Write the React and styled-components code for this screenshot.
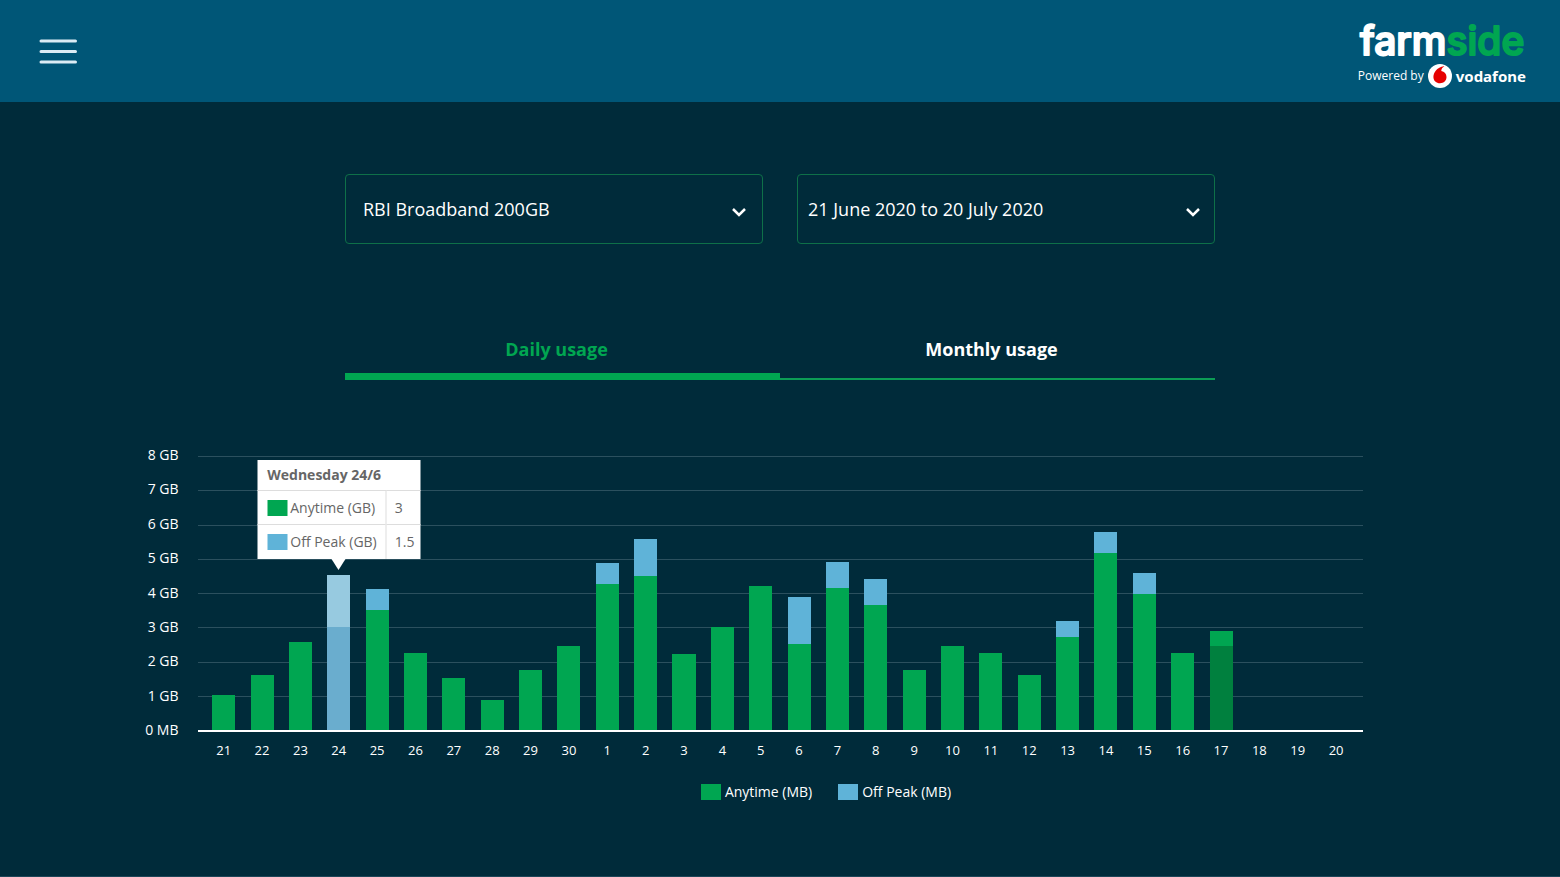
import React, { useState } from "react";
import styled, { createGlobalStyle } from "styled-components";

const MAX_GB = 8;

const TICKS = ["8 GB", "7 GB", "6 GB", "5 GB", "4 GB", "3 GB", "2 GB", "1 GB", "0 MB"];

const DAYS = [
  { day: 21, anytime: 1.02 },
  { day: 22, anytime: 1.62 },
  { day: 23, anytime: 2.58 },
  { day: 24, anytime: 3, offPeak: 1.54, state: "active" },
  { day: 25, anytime: 3.5, offPeak: 0.63 },
  { day: 26, anytime: 2.26 },
  { day: 27, anytime: 1.53 },
  { day: 28, anytime: 0.89 },
  { day: 29, anytime: 1.76 },
  { day: 30, anytime: 2.46 },
  { day: 1, anytime: 4.26, offPeak: 0.63 },
  { day: 2, anytime: 4.5, offPeak: 1.09 },
  { day: 3, anytime: 2.22 },
  { day: 4, anytime: 3.02 },
  { day: 5, anytime: 4.21 },
  { day: 6, anytime: 2.5, offPeak: 1.39 },
  { day: 7, anytime: 4.16, offPeak: 0.76 },
  { day: 8, anytime: 3.66, offPeak: 0.76 },
  { day: 9, anytime: 1.76 },
  { day: 10, anytime: 2.46 },
  { day: 11, anytime: 2.26 },
  { day: 12, anytime: 1.62 },
  { day: 13, anytime: 2.73, offPeak: 0.46 },
  { day: 14, anytime: 5.16, offPeak: 0.63 },
  { day: 15, anytime: 3.96, offPeak: 0.61 },
  { day: 16, anytime: 2.26 },
  { day: 17, anytime: 2.46, offPeak: 0.44, state: "today" },
  { day: 18 },
  { day: 19 },
  { day: 20 },
];

const COLORS = {
  default: { anytime: "#00a651", offPeak: "#5fb3d8" },
  active: { anytime: "#6aadce", offPeak: "#97cae0" },
  today: { anytime: "#00803e", offPeak: "#00a651" },
};

const percent = (gb) => `${(gb / MAX_GB) * 100}%`;

function Logo() {
  return (
    <S.Logo>
      <S.LogoName width="168" height="34" viewBox="0 0 168 34">
        <text x="2" y="31">
          farm<tspan className="green">side</tspan>
        </text>
      </S.LogoName>
      <S.Powered>
        Powered by
        <svg width="24" height="24" viewBox="0 0 24 24" aria-hidden="true">
          <circle cx="12" cy="12" r="12" fill="#fff" />
          <path
            d="M15.8 2.2C12.8 2.3 9.6 4.3 7.7 6.8C6.2 8.8 5.4 11 5.4 13C5.4 16.8 8.3 19.3 12 19.3C15.8 19.3 18.5 16.7 18.5 13.1C18.5 9.8 16.4 7.7 13.3 7C13.2 5 14.4 3.1 16.4 2.4Z"
            fill="#e60000"
          />
        </svg>
        <S.Vodafone>vodafone</S.Vodafone>
      </S.Powered>
    </S.Logo>
  );
}

function Dropdown({ label, options, start, end }) {
  return (
    <S.Field>
      <S.Select aria-label={label} $start={start}>
        {options.map((option) => (
          <option key={option}>{option}</option>
        ))}
      </S.Select>
      <S.Chevron width="16" height="10" viewBox="0 0 16 10" aria-hidden="true" $end={end}>
        <path d="M2 2L8 8L14 2" fill="none" stroke="#fff" strokeWidth="2.5" />
      </S.Chevron>
    </S.Field>
  );
}

function Tooltip() {
  return (
    <S.Tooltip>
      <S.TooltipTable>
        <thead>
          <tr>
            <S.TooltipTitle colSpan="2">Wednesday 24/6</S.TooltipTitle>
          </tr>
        </thead>
        <tbody>
          <tr>
            <S.TooltipLabel>
              <S.TooltipKey>
                <S.Swatch $color={COLORS.default.anytime} />
                Anytime (GB)
              </S.TooltipKey>
            </S.TooltipLabel>
            <S.TooltipValue>3</S.TooltipValue>
          </tr>
          <tr>
            <S.TooltipLabel>
              <S.TooltipKey>
                <S.Swatch $color={COLORS.default.offPeak} />
                Off Peak (GB)
              </S.TooltipKey>
            </S.TooltipLabel>
            <S.TooltipValue>1.5</S.TooltipValue>
          </tr>
        </tbody>
      </S.TooltipTable>
    </S.Tooltip>
  );
}

function Bar({ anytime = 0, offPeak = 0, state = "default" }) {
  const total = anytime + offPeak;

  return (
    <S.Bar $color={COLORS[state].anytime} style={{ height: percent(total) }}>
      {state === "active" && <Tooltip />}
      {offPeak > 0 && (
        <S.OffPeak
          $color={COLORS[state].offPeak}
          style={{ height: `${(offPeak / total) * 100}%` }}
        />
      )}
    </S.Bar>
  );
}

function Chart() {
  return (
    <S.Chart>
      <S.YAxis>
        {TICKS.map((tick) => (
          <span key={tick}>{tick}</span>
        ))}
      </S.YAxis>
      <S.Plot>
        <S.Grid>
          {TICKS.slice(1).map((tick) => (
            <S.GridLine key={tick} />
          ))}
        </S.Grid>
        <S.Bars>
          {DAYS.map(({ day, ...usage }) => (
            <S.Slot key={day}>
              <Bar {...usage} />
            </S.Slot>
          ))}
        </S.Bars>
      </S.Plot>
      <S.XAxis>
        {DAYS.map(({ day }) => (
          <span key={day}>{day}</span>
        ))}
      </S.XAxis>
      <S.Legend>
        <S.LegendItem>
          <S.Swatch $color={COLORS.default.anytime} />
          Anytime (MB)
        </S.LegendItem>
        <S.LegendItem>
          <S.Swatch $color={COLORS.default.offPeak} />
          Off Peak (MB)
        </S.LegendItem>
      </S.Legend>
    </S.Chart>
  );
}

export default function App() {
  const [tab, setTab] = useState("daily");

  return (
    <S.Page>
      <GlobalStyle />
      <S.Header>
        <S.MenuButton aria-label="Menu">
          <svg width="38" height="25" viewBox="0 0 38 25" aria-hidden="true">
            <path
              d="M2 2H36.5M2 12.5H36.5M2 23H36.5"
              stroke="#dcecf5"
              strokeWidth="3"
              strokeLinecap="round"
            />
          </svg>
        </S.MenuButton>
        <Logo />
      </S.Header>
      <main>
        <S.Controls>
          <S.Filters>
            <Dropdown label="Plan" start="17px" end="15px" options={["RBI Broadband 200GB"]} />
            <Dropdown
              label="Billing period"
              start="10px"
              end="13px"
              options={["21 June 2020 to 20 July 2020"]}
            />
          </S.Filters>
          <S.Tabs role="tablist">
            <S.Tab role="tab" aria-selected={tab === "daily"} onClick={() => setTab("daily")}>
              Daily usage
            </S.Tab>
            <S.Tab role="tab" aria-selected={tab === "monthly"} onClick={() => setTab("monthly")}>
              Monthly usage
            </S.Tab>
          </S.Tabs>
        </S.Controls>
        <Chart />
      </main>
    </S.Page>
  );
}

const GlobalStyle = createGlobalStyle`
  * {
    box-sizing: border-box;
  }

  body {
    margin: 0;
    background: #002b3a;
    color: #fff;
    font-family: "Open Sans", sans-serif;
  }

  button,
  select {
    font-family: inherit;
  }
`;

const S = {
  Page: styled.div`
    min-height: 100vh;
    border-bottom: 1px solid #1d4658;
  `,

  Header: styled.header`
    display: flex;
    align-items: center;
    justify-content: space-between;
    height: 102px;
    padding: 0 34px 0 39px;
    background: #005677;
  `,

  MenuButton: styled.button`
    display: flex;
    padding: 0;
    border: 0;
    background: none;
    cursor: pointer;
  `,

  Logo: styled.div`
    display: flex;
    flex-direction: column;
    gap: 6px;
    padding-top: 10px;
  `,

  /* the outline rounds off the letter ends */
  LogoName: styled.svg`
    overflow: visible;
    font-family: Inter, sans-serif;
    font-size: 39px;
    font-weight: 500;
    fill: #fff;
    stroke: #fff;
    stroke-width: 2px;
    stroke-linejoin: round;

    .green {
      fill: #00a651;
      stroke: #00a651;
    }
  `,

  Powered: styled.div`
    display: flex;
    align-items: center;
    gap: 4px;
    font-size: 12px;
    line-height: 20px;
  `,

  Vodafone: styled.span`
    font-family: "Noto Sans", sans-serif;
    font-size: 15px;
    font-weight: 700;
  `,

  Controls: styled.div`
    max-width: 870px;
    margin: 0 auto;
    padding-top: 72px;
  `,

  Filters: styled.div`
    display: grid;
    grid-template-columns: 1fr 1fr;
    gap: 34px;
  `,

  Field: styled.div`
    display: grid;
    align-items: center;
    border: 1px solid #0e7048;
    border-radius: 4px;

    > * {
      grid-area: 1 / 1;
    }
  `,

  Select: styled.select`
    width: 100%;
    height: 68px;
    padding: 0 48px 0 ${(props) => props.$start};
    appearance: none;
    border: 0;
    background: none;
    color: #fff;
    font-size: 18px;
  `,

  Chevron: styled.svg`
    justify-self: end;
    margin: 6px ${(props) => props.$end} 0 0;
    pointer-events: none;
  `,

  Tabs: styled.div`
    display: grid;
    grid-template-columns: 1fr 1fr;
    margin-top: 80px;
    box-shadow: inset 0 -2px #0c9c55;
  `,

  Tab: styled.button`
    height: 56px;
    padding: 0 12px 7px 0;
    border: 0;
    background: none;
    color: #fff;
    font-size: 18px;
    font-weight: 700;
    cursor: pointer;

    &[aria-selected="true"] {
      color: #00a651;
      box-shadow: inset 0 -7px #00a651;
    }
  `,

  Chart: styled.section`
    display: grid;
    grid-template-columns: minmax(70px, 1fr) minmax(0, 1165px) minmax(20px, 1fr);
    margin-top: 76px;
    padding-bottom: 72px;
    font-size: 14px;
    line-height: 20px;
  `,

  YAxis: styled.div`
    display: flex;
    flex-direction: column;
    justify-content: space-between;
    margin: -11px 19px -8px 0;
    text-align: right;
  `,

  Plot: styled.div`
    display: grid;
    height: 276px;
    border-bottom: 2px solid #fff;

    > * {
      grid-area: 1 / 1;
    }
  `,

  Grid: styled.div`
    display: grid;
    grid-auto-rows: 1fr;
  `,

  GridLine: styled.div`
    border-top: 1px solid #2b505e;
  `,

  Bars: styled.div`
    display: flex;
    padding: 0 7px;
  `,

  Slot: styled.div`
    display: flex;
    flex: 1;
    align-items: flex-end;
    justify-content: center;
  `,

  Bar: styled.div`
    position: relative;
    width: 60%;
    background: ${(props) => props.$color};
  `,

  OffPeak: styled.div`
    background: ${(props) => props.$color};
  `,

  XAxis: styled.div`
    display: flex;
    grid-column: 2;
    padding: 8px 7px 0;
    font-size: 13px;
    text-align: center;

    span {
      flex: 1;
    }
  `,

  Legend: styled.div`
    display: flex;
    grid-column: 2;
    justify-content: center;
    gap: 26px;
    margin-top: 22px;
    padding-left: 92px;
  `,

  LegendItem: styled.div`
    display: flex;
    align-items: center;
    gap: 4px;
  `,

  Swatch: styled.span`
    width: 20px;
    height: 16px;
    background: ${(props) => props.$color};
  `,

  Tooltip: styled.div`
    position: absolute;
    bottom: calc(100% + 16px);
    left: 50%;
    z-index: 1;
    transform: translateX(-50%);
    background: #fff;
    color: #666;

    &::after {
      content: "";
      position: absolute;
      top: 100%;
      left: 50%;
      margin-left: -7px;
      border: solid transparent;
      border-width: 11px 7px 0;
      border-top-color: #fff;
    }
  `,

  TooltipTable: styled.table`
    width: 163px;
    border-collapse: collapse;
    white-space: nowrap;

    tbody td {
      border-top: 1px solid #ddd;
    }
  `,

  TooltipTitle: styled.th`
    height: 31px;
    padding: 1px 10px 0;
    text-align: left;
  `,

  TooltipLabel: styled.td`
    width: 129px;
    height: 34px;
    padding: 1px 0 0 10px;
    border-right: 1px solid #ddd;
  `,

  TooltipKey: styled.div`
    display: flex;
    align-items: center;
    gap: 3px;
  `,

  TooltipValue: styled.td`
    padding: 0 0 0 8px;
  `,
};
